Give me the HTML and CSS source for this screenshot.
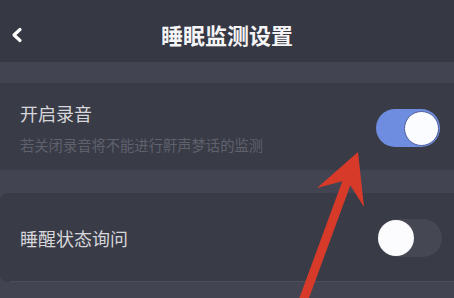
FILE: index.html
```html
<!DOCTYPE html>
<html lang="zh-CN">
<head>
  <meta charset="UTF-8" />
  <title>睡眠监测设置</title>
  <link rel="stylesheet" href="styles.css">
</head>
<body>
  <div class="topbar">
    <svg class="back" width="12" height="16" viewBox="0 0 12 16">
      <polyline points="9,2.5 3,8 9,13.5" fill="none" stroke="#fff" stroke-width="3.2" stroke-linecap="round" stroke-linejoin="round" />
    </svg>
    <div class="title">睡眠监测设置</div>
  </div>

  <div class="card first">
    <div class="text">
      <div class="label">开启录音</div>
      <div class="hint">若关闭录音将不能进行鼾声梦话的监测</div>
    </div>
    <div class="switch on"><span class="knob"></span></div>
  </div>

  <div class="card second">
    <div class="text">
      <div class="label">睡醒状态询问</div>
    </div>
    <div class="switch"><span class="knob"></span></div>
  </div>

  <!-- red annotation arrow drawn over the screenshot -->
  <svg class="arrow" width="454" height="298" viewBox="0 0 454 298">
    <line x1="302" y1="304" x2="349" y2="176" stroke="#d83a2a" stroke-width="9" />
    <polygon points="358,152 317,188 347,180 364,207" fill="#d83a2a" />
  </svg>
</body>
</html>
```

FILE: styles.css
```css
body {
  margin: 0;
  width: 454px;
  height: 298px;
  overflow: hidden;
  position: relative;
  background: #424451;
  font-family: "Noto Sans CJK SC", "Noto Sans", sans-serif;
}
.topbar {
  height: 62px;
  background: #363843;
  display: flex;
  align-items: center;
  justify-content: center;
  position: relative;
}
.back {
  position: absolute;
  left: 11px;
  top: 27px;
}
.title {
  color: #f4f4f6;
  font-size: 22px;
  font-weight: bold;
  line-height: 30px;
  margin-top: 6px;
}
.card {
  background: #393b46;
  display: flex;
  align-items: center;
  justify-content: space-between;
  padding: 0 12px 0 20px;
  position: relative;
}
.card.first {
  margin-top: 21px;
  height: 87px;
}
.card.second {
  margin-top: 23px;
  height: 89px;
  border-radius: 8px 0 0 8px;
}
.card.second::after {
  content: "";
  position: absolute;
  left: 10px;
  right: 0;
  bottom: 0;
  height: 1px;
  background: #4b4d5a;
}
.label {
  color: #d6d6db;
  font-size: 18px;
  line-height: 24px;
}
.first .label {
  margin-top: 3px;
}
.hint {
  color: #5f616d;
  font-size: 14.3px;
  line-height: 20px;
  margin-top: 10px;
}
.switch {
  width: 64px;
  height: 38px;
  border-radius: 19px;
  background: #454753;
  position: relative;
  flex-shrink: 0;
}
.first .switch {
  margin-right: 2px;
  margin-top: 2px;
}
.switch .knob {
  position: absolute;
  top: 1px;
  left: 0;
  width: 36px;
  height: 36px;
  border-radius: 50%;
  background: #fcfcfe;
}
.switch.on {
  background: #6f8de0;
}
.switch.on .knob {
  left: auto;
  right: 1px;
  top: 2px;
  width: 33px;
  height: 33px;
  border: 1px solid #4e5f9a;
  background: #fbfcff;
}
.arrow {
  position: absolute;
  left: 0;
  top: 0;
  pointer-events: none;
}
```
